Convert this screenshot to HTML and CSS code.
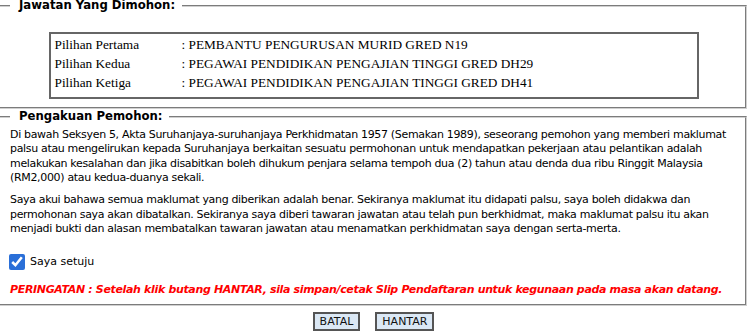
FILE: index.html
```html
<!DOCTYPE html>
<html>
<head>
<meta charset="utf-8">
<link rel="stylesheet" href="styles.css">
</head>
<body>
<div class="page">
  <fieldset class="fs fs-job">
    <legend class="fs-title">Jawatan Yang Dimohon:</legend>
    <table class="choices">
      <tr><td class="c-label">Pilihan Pertama</td><td>: PEMBANTU PENGURUSAN MURID GRED N19</td></tr>
      <tr><td class="c-label">Pilihan Kedua</td><td>: PEGAWAI PENDIDIKAN PENGAJIAN TINGGI GRED DH29</td></tr>
      <tr><td class="c-label">Pilihan Ketiga</td><td>: PEGAWAI PENDIDIKAN PENGAJIAN TINGGI GRED DH41</td></tr>
    </table>
  </fieldset>
  <fieldset class="fs fs-decl">
    <legend class="fs-title">Pengakuan Pemohon:</legend>
    <p class="para">Di bawah Seksyen 5, Akta Suruhanjaya-suruhanjaya Perkhidmatan 1957 (Semakan 1989), seseorang pemohon yang memberi maklumat palsu atau mengelirukan kepada Suruhanjaya berkaitan sesuatu permohonan untuk mendapatkan pekerjaan atau pelantikan adalah melakukan kesalahan dan jika disabitkan boleh dihukum penjara selama tempoh dua (2) tahun atau denda dua ribu Ringgit Malaysia (RM2,000) atau kedua-duanya sekali.</p>
    <p class="para">Saya akui bahawa semua maklumat yang diberikan adalah benar. Sekiranya maklumat itu didapati palsu, saya boleh didakwa dan permohonan saya akan dibatalkan. Sekiranya saya diberi tawaran jawatan atau telah pun berkhidmat, maka maklumat palsu itu akan menjadi bukti dan alasan membatalkan tawaran jawatan atau menamatkan perkhidmatan saya dengan serta-merta.</p>
    <label class="agree"><input type="checkbox" class="agree-box" checked><span>Saya setuju</span></label>
    <p class="warn">PERINGATAN : Setelah klik butang HANTAR, sila simpan/cetak Slip Pendaftaran untuk kegunaan pada masa akan datang.</p>
  </fieldset>
  <div class="actions">
    <button class="btn" type="button">BATAL</button>
    <button class="btn" type="button">HANTAR</button>
  </div>
</div>
</body>
</html>
```
FILE: styles.css
```css
html, body {
  margin: 0;
  padding: 0;
  background: #fff;
}
body {
  font-family: "DejaVu Sans", Verdana, sans-serif;
  font-size: 11px;
  color: #000;
  overflow: hidden;
}
.page {
  width: 751px;
  margin-left: -4px;
}
.fs {
  margin: 0;
  border: 2px groove #d0d0d0;
  padding: 0 8px 0 12px;
  min-width: 0;
}
.fs-job {
  margin-top: 0;
  padding-bottom: 8px;
}
.fs-decl {
  margin-top: 2px;
  padding-bottom: 7px;
}
.fs-title {
  font-weight: bold;
  font-size: 11.7px;
  line-height: 11px;
  padding: 0 7px 0 9px;
}
.choices {
  font-family: "Liberation Serif", "Times New Roman", serif;
  font-size: 13.3px;
  border: 2px solid #666;
  border-spacing: 0;
  width: 650px;
  margin: 21px auto 0;
  padding: 1px 4px 5px 4px;
}
.choices td {
  padding: 0;
  height: 19px;
  line-height: 19px;
  white-space: nowrap;
}
.c-label {
  width: 127px;
}
.para {
  margin: 6px 0 8px;
  line-height: 14.33px;
  letter-spacing: -0.33px;
}
.para + .para {
  margin-top: 0;
}
.agree {
  display: flex;
  align-items: center;
  gap: 5px;
  margin: 17px 0 0 -1px;
  height: 17px;
}
.agree-box {
  width: 16px;
  height: 16px;
  margin: 0;
  accent-color: #2a6fd8;
}
.warn {
  margin: 13px 0 0;
  color: #ff0000;
  font-weight: bold;
  font-style: italic;
  line-height: 14px;
  letter-spacing: -0.34px;
}
.actions {
  display: flex;
  justify-content: center;
  gap: 15px;
  padding-top: 6px;
  padding-left: 4px;
}
.btn {
  font-family: "DejaVu Sans", Verdana, sans-serif;
  font-size: 11px;
  color: #111;
  background: #dbe8f5;
  border: 2px solid #555;
  border-radius: 0;
  height: 19px;
  padding: 0 5px;
  line-height: 15px;
}
```
